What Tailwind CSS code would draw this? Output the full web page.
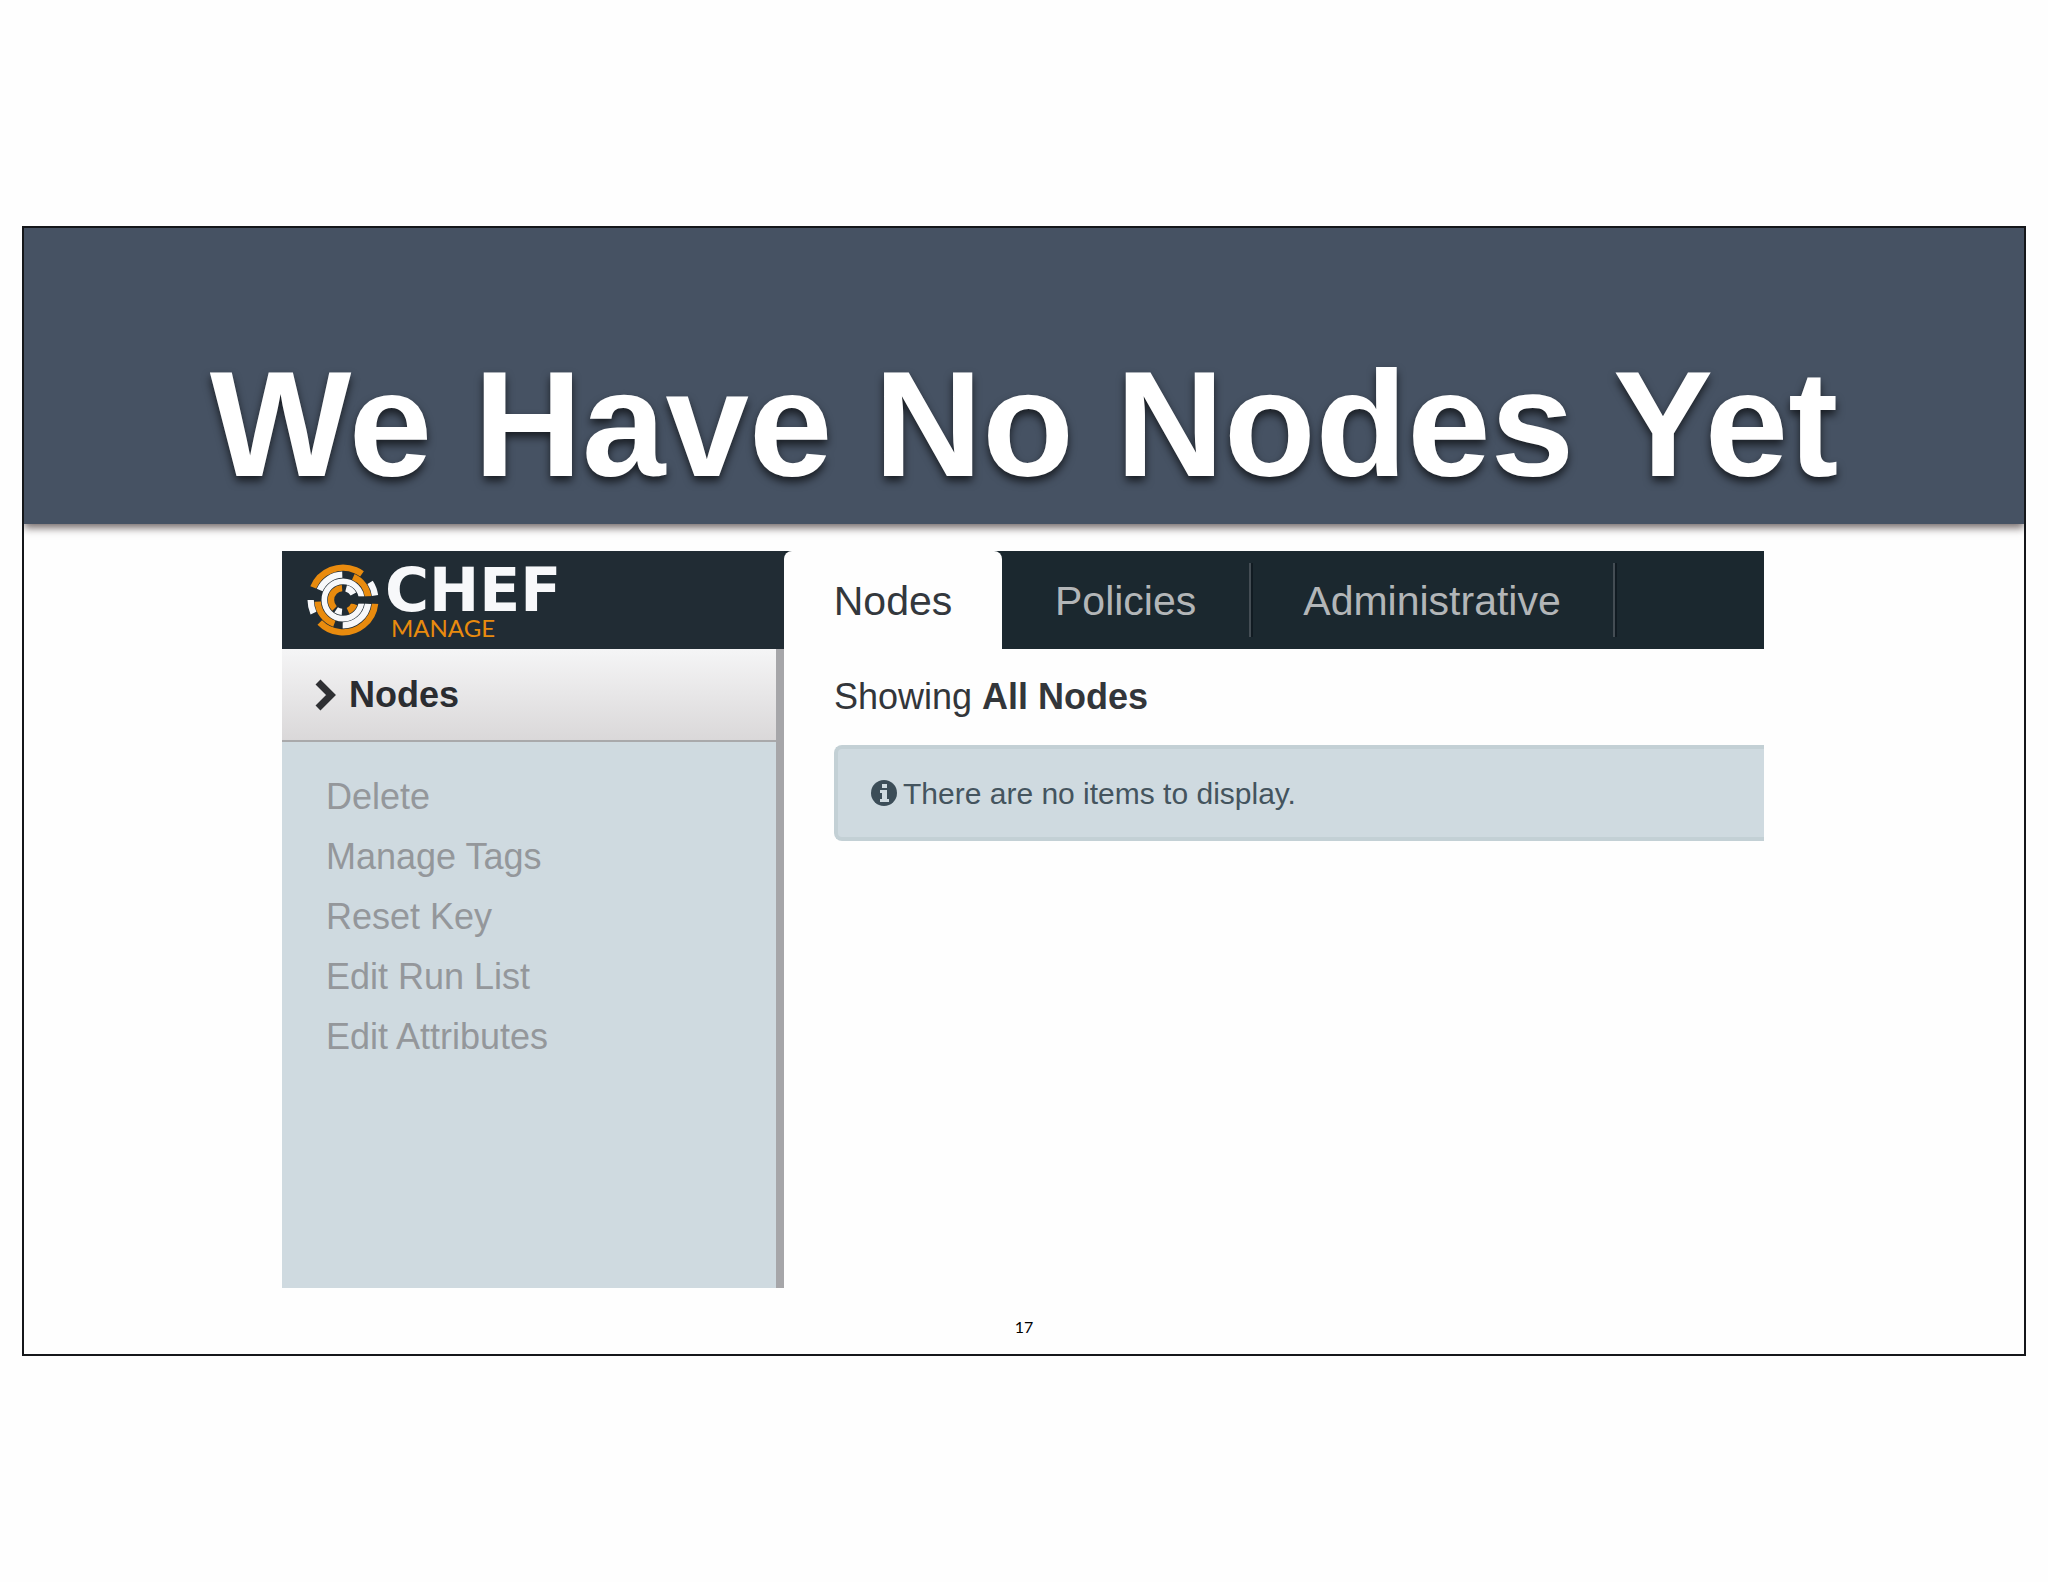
<!DOCTYPE html>
<html lang="en">
<head>
  <meta charset="UTF-8" />
  <meta name="viewport" content="width=device-width, initial-scale=1.0"/>
  <title>We Have No Nodes Yet</title>
  <script src="https://cdn.jsdelivr.net/npm/@tailwindcss/browser@4"></script>
</head>
<body class="bg-[#fefefe] min-h-screen flex items-center px-[22px] font-['Liberation_Sans',Arial,sans-serif]">

  <!-- Slide -->
  <main class="w-full border-2 border-[#15171a] bg-[#fefefe] flex flex-col overflow-hidden">

    <!-- Title -->
    <header class="bg-[#465263] pt-24 text-center shadow-[0_4px_8px_rgba(60,45,45,0.7)]">
      <h1 class="text-[150px] leading-[200px] font-bold text-white whitespace-nowrap [text-shadow:0_5px_8px_rgba(0,0,0,0.65)]">We Have No Nodes Yet</h1>
    </header>

    <!-- Chef Manage -->
    <section class="ml-[258px] mr-[260px] mt-[27px] flex min-h-[737px] overflow-hidden">

      <!-- Sidebar -->
      <aside class="w-[502px] shrink-0 flex flex-col">
        <a href="#" class="h-[98px] bg-[#212c34] flex items-center gap-1.5 pl-[25px]">
          <svg class="size-[72px]" viewBox="-108 -108 216 216" fill="none" aria-hidden="true">
            <g stroke="#e98b0e" stroke-width="19">
              <circle r="97" pathLength="360" stroke-dasharray="103 360" transform="rotate(203)"/>
              <circle r="97" pathLength="360" stroke-dasharray="130 360" transform="rotate(6)"/>
              <circle r="76" pathLength="360" stroke-dasharray="58 360" transform="rotate(294)"/>
              <circle r="76" pathLength="360" stroke-dasharray="66 360" transform="rotate(110)"/>
              <circle r="36" pathLength="360" stroke-dasharray="130 360" transform="rotate(135)"/>
              <circle r="36" pathLength="360" stroke-dasharray="45 360" transform="rotate(20)"/>
            </g>
            <g stroke="#f7f8fa" stroke-width="19">
              <circle r="97" pathLength="360" stroke-dasharray="25 360" transform="rotate(327)"/>
              <circle r="97" pathLength="360" stroke-dasharray="24 360" transform="rotate(156)"/>
              <circle r="76" pathLength="360" stroke-dasharray="65 360" transform="rotate(203)"/>
              <circle r="76" pathLength="360" stroke-dasharray="82 360" transform="rotate(8)"/>
              <circle r="56" stroke-width="17"/>
              <circle r="36" pathLength="360" stroke-dasharray="45 360" transform="rotate(285)"/>
              <circle r="36" pathLength="360" stroke-dasharray="30 360" transform="rotate(95)"/>
            </g>
            <rect x="18" y="-11" width="90" height="22" fill="#212c34"/>
          </svg>
          <span class="flex flex-col">
            <span class="font-['DejaVu_Sans',sans-serif] font-bold text-[60px] leading-[56px] text-[#f7f8fa]">CHEF</span>
            <span class="pl-1.5 font-[Lato,sans-serif] text-2xl leading-5 text-[#e98b0e]">MANAGE</span>
          </span>
        </a>
        <div class="grow flex flex-col border-r-8 border-[#a6a6a9] bg-[#cfdae0]">
          <h2 class="h-[93px] flex items-center gap-[10px] pl-[33px] border-b-2 border-[#a9a9ab] bg-linear-to-b from-[#f5f5f6] to-[#dad8d9] text-4xl font-bold text-[#2b2d31]">
            <svg class="w-6 h-9" viewBox="0 0 24 36" fill="none" stroke="#2f3033" stroke-width="7" aria-hidden="true">
              <path d="M3 5l13 13L3 31"/>
            </svg>
            Nodes
          </h2>
          <ul class="pt-[25px] pl-11 text-4xl leading-[60px] text-[#94979b]">
            <li><button type="button">Delete</button></li>
            <li><button type="button">Manage Tags</button></li>
            <li><button type="button">Reset Key</button></li>
            <li><button type="button">Edit Run List</button></li>
            <li><button type="button">Edit Attributes</button></li>
          </ul>
        </div>
      </aside>

      <!-- Content -->
      <div class="grow flex flex-col">
        <nav class="h-[98px] bg-[#1b282f] flex items-stretch text-[41px] text-[#b3b6b8]">
          <a href="#" class="w-[218px] pt-1 flex items-center justify-center rounded-t-lg bg-[#fefefe] text-[#33383d]">Nodes</a>
          <a href="#" class="my-3 pt-1 px-[53px] flex items-center border-r-2 border-[#444d54] shadow-[2px_0_0_#111b22]">Policies</a>
          <a href="#" class="my-3 pt-1 px-[52px] flex items-center border-r-2 border-[#444d54] shadow-[2px_0_0_#111b22]">Administrative</a>
        </nav>
        <p class="pt-6 pl-[50px] text-4xl leading-[48px] text-[#33363a]">Showing <b>All Nodes</b></p>
        <div class="mt-6 ml-[50px] h-24 flex items-center gap-1.5 pl-[33px] border-4 border-r-0 border-[#c3d0d5] rounded-l-lg bg-[#cfdae0] text-[30px] text-[#44545e]">
          <svg class="size-[26px]" viewBox="0 0 26 26" aria-hidden="true">
            <circle cx="13" cy="13" r="13" fill="#3c4d58"/>
            <path d="M11 4h5v4h-5zM9 10h7v9h2v3H9v-3h2v-6H9z" fill="#cfdae0"/>
          </svg>
          There are no items to display.
        </div>
      </div>
    </section>

    <!-- Page number -->
    <footer class="pt-[29px] pb-[17px] text-center font-[Lato,sans-serif] text-base leading-5 text-black">17</footer>
  </main>

</body>
</html>
